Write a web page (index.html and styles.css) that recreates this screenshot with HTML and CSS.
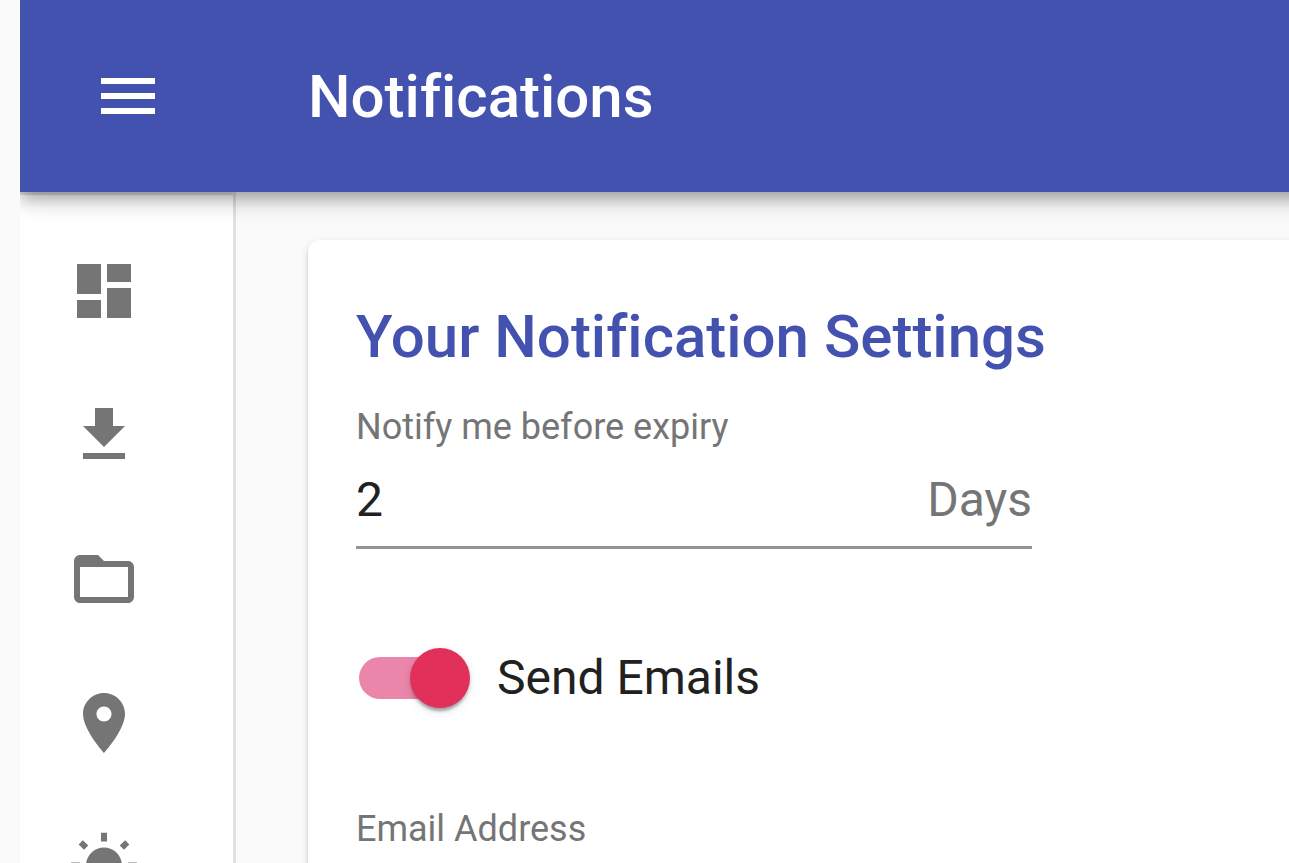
FILE: index.html
```html
<!DOCTYPE html>
<html lang="en">
  <head>
    <meta charset="UTF-8" />
    <meta name="viewport" content="width=device-width, initial-scale=1.0" />
    <title>Notifications</title>
    <link rel="stylesheet" href="styles.css">
  </head>
  <body>
    <div class="app">
      <header class="app-bar">
        <button type="button" class="menu-button" aria-label="Open menu">
          <svg class="icon" viewBox="0 0 24 24"><path d="M3 18h18v-2H3v2zm0-5h18v-2H3v2zm0-7v2h18V6H3z" /></svg>
        </button>
        <h1 class="title">Notifications</h1>
      </header>
      <div class="layout">
        <nav class="sidebar">
          <a class="nav-item" href="#dashboard" aria-label="Dashboard">
            <svg class="icon" viewBox="0 0 24 24"><path d="M3 13h8V3H3v10zm0 8h8v-6H3v6zm10 0h8V11h-8v10zm0-18v6h8V3h-8z" /></svg>
          </a>
          <a class="nav-item" href="#downloads" aria-label="Downloads">
            <svg class="icon" viewBox="0 0 24 24"><path d="M19 9h-4V3H9v6H5l7 7 7-7zM5 18v2h14v-2H5z" /></svg>
          </a>
          <a class="nav-item" href="#files" aria-label="Files">
            <svg class="icon" viewBox="0 0 24 24"><path d="M20 6h-8l-2-2H4c-1.1 0-1.99.9-1.99 2L2 18c0 1.1.9 2 2 2h16c1.1 0 2-.9 2-2V8c0-1.1-.9-2-2-2zm0 12H4V8h16v10z" /></svg>
          </a>
          <a class="nav-item" href="#places" aria-label="Places">
            <svg class="icon" viewBox="0 0 24 24"><path d="M12 2C8.13 2 5 5.13 5 9c0 5.25 7 13 7 13s7-7.75 7-13c0-3.87-3.13-7-7-7zm0 9.500c-1.38 0-2.500-1.120-2.500-2.500s1.120-2.500 2.500-2.500 2.500 1.120 2.500 2.500-1.120 2.500-2.500 2.500z" /></svg>
          </a>
          <a class="nav-item" href="#theme" aria-label="Theme">
            <svg class="icon" viewBox="0 0 24 24"><path d="M6.760 4.840l-1.800-1.790-1.410 1.410 1.790 1.790 1.420-1.410zM4 10.500H1v2h3v-2zm9-9.950h-2V3.500h2V.55zm7.450 3.910l-1.410-1.410-1.790 1.790 1.410 1.410 1.790-1.790zm-3.210 13.700l1.790 1.800 1.410-1.410-1.800-1.790-1.400 1.400zM20 10.500v2h3v-2h-3zm-8-5c-3.310 0-6 2.690-6 6s2.690 6 6 6 6-2.690 6-6-2.690-6-6-6zm-1 16.950h2V19.500h-2v2.950zm-7.450-3.910l1.410 1.410 1.790-1.800-1.410-1.410-1.790 1.800z" /></svg>
          </a>
        </nav>
        <main class="content">
          <form class="card">
            <h2 class="title">Your Notification Settings</h2>
            <div class="field">
              <label for="days">Notify me before expiry</label>
              <div class="field-input">
                <input type="text" id="days" name="days" value="2" />
                <span class="unit">Days</span>
              </div>
            </div>
            <div class="switch">
              <input type="checkbox" id="sendEmails" name="sendEmails" checked />
              <label for="sendEmails">Send Emails</label>
            </div>
            <div class="field">
              <label for="email">Email Address</label>
              <div class="field-input">
                <input type="email" id="email" name="email" />
              </div>
            </div>
          </form>
        </main>
      </div>
    </div>
  </body>
</html>
```
FILE: styles.css
```css
* {
  box-sizing: border-box;
}
body {
  margin: 0;
  padding-left: 20px;
  overflow: hidden;
  background: #fafafa;
  color: #212121;
  font-family: Roboto, "Liberation Sans", sans-serif;
  font-size: 48px;
  font-variant-ligatures: none;
}
/* Runs past the right edge of the window */
.app {
  display: flex;
  flex-direction: column;
  height: 100vh;
  margin-right: -48px;
  overflow: hidden;
}
.icon {
  display: block;
  width: 72px;
  height: 72px;
  fill: currentColor;
}
.title {
  margin: 0;
  font-size: 60px;
  font-weight: 500;
  line-height: 98px;
  white-space: nowrap;
}

/* Top bar */
.app-bar {
  position: relative;
  z-index: 1;
  flex: none;
  display: flex;
  align-items: flex-start;
  gap: 108px;
  height: 192px;
  padding: 24px 36px;
  background: #4351af;
  color: #fff;
  box-shadow: 0 6px 12px -3px rgba(0, 0, 0, 0.2), 0 12px 15px 0 rgba(0, 0, 0, 0.14), 0 3px 30px 0 rgba(0, 0, 0, 0.12);
}
.app-bar .title {
  padding: 24px 0;
}
.menu-button {
  padding: 36px;
  border: 0;
  background: none;
  color: inherit;
  cursor: pointer;
}

/* Side menu */
.layout {
  flex: 1;
  display: flex;
  min-height: 0;
}
.sidebar {
  flex: none;
  width: 216px;
  padding-top: 24px;
  overflow: hidden;
  background: #fff;
  border-top: 3px solid #e0e0e0;
  border-right: 3px solid #e0e0e0;
}
.nav-item {
  display: block;
  padding: 36px 48px;
  color: #757575;
}

/* Settings */
.content {
  flex: 1;
  min-width: 0;
  padding: 48px 0 0 72px;
}
.card {
  display: flex;
  flex-direction: column;
  align-items: flex-start;
  padding: 48px;
  background: #fff;
  border-radius: 12px;
  box-shadow: 0 6px 3px -3px rgba(0, 0, 0, 0.2), 0 3px 3px 0 rgba(0, 0, 0, 0.14), 0 3px 9px 0 rgba(0, 0, 0, 0.12);
}
.card .title {
  margin-bottom: 19px;
  color: #4351af;
}
.field {
  width: 100%;
  max-width: 676px;
}
.field label {
  display: block;
  margin-bottom: 4px;
  color: #757575;
  font-size: 36px;
  line-height: 44px;
}
.field-input {
  display: flex;
  align-items: center;
  height: 96px;
  border-bottom: 3px solid #949494;
}
.field-input input {
  flex: 1;
  min-width: 0;
  padding: 0;
  border: 0;
  outline: none;
  background: none;
  color: inherit;
  font: inherit;
}
.unit {
  color: #757575;
}
.switch {
  display: flex;
  align-items: center;
  gap: 36px;
  margin: 72px 0;
  padding: 36px 3px;
  line-height: 42px;
}
.switch input {
  appearance: none;
  position: relative;
  width: 102px;
  height: 42px;
  margin: 0;
  border-radius: 21px;
  background: #bdbdbd;
}
.switch input::after {
  content: "";
  position: absolute;
  top: -9px;
  left: -9px;
  width: 60px;
  height: 60px;
  border-radius: 50%;
  background: #fff;
  box-shadow: 0 6px 3px -3px rgba(0, 0, 0, 0.2), 0 3px 3px 0 rgba(0, 0, 0, 0.14), 0 3px 9px 0 rgba(0, 0, 0, 0.12);
}
.switch input:checked {
  background: #ea86aa;
}
.switch input:checked::after {
  left: 51px;
  background: #e1315b;
}
```
